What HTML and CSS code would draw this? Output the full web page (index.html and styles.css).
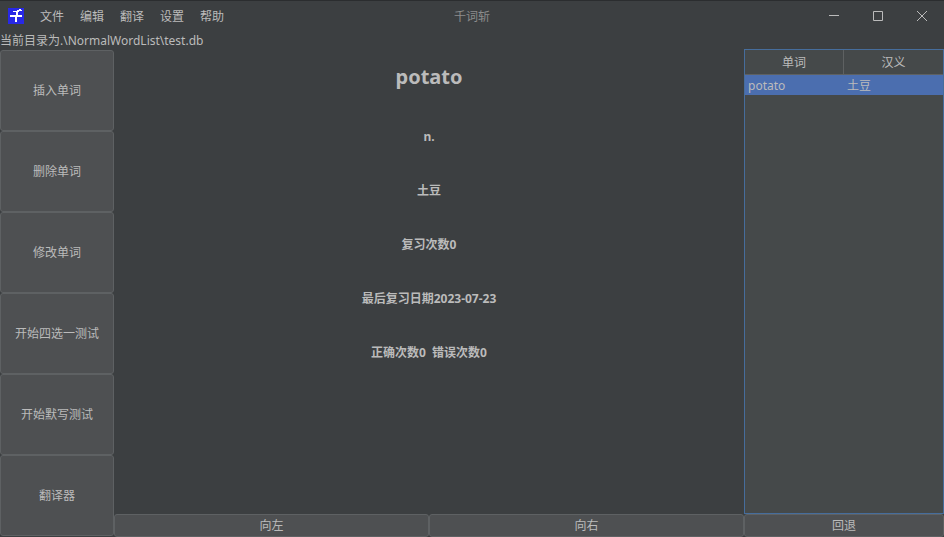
FILE: index.html
```html
<!DOCTYPE html>
<html lang="zh-CN">
<head>
<meta charset="utf-8">
<title>千词斩</title>
<link rel="stylesheet" href="styles.css">
</head>
<body>
<div class="window">
  <header class="titlebar">
    <svg class="logo" viewBox="0 0 16 16" shape-rendering="crispEdges" aria-hidden="true">
      <rect width="16" height="16" fill="#2828e6"/>
      <path d="M11 1h2v1h-2ZM9 2h5v1H9ZM5 3h6v1H5ZM8 4h2v3H8ZM2 7h12v2H2ZM7 9h2v5H7Z" fill="#fff"/>
    </svg>
    <nav class="menu">
      <button class="menu-item">文件</button>
      <button class="menu-item">编辑</button>
      <button class="menu-item">翻译</button>
      <button class="menu-item">设置</button>
      <button class="menu-item">帮助</button>
    </nav>
    <h1 class="title">千词斩</h1>
    <div class="controls">
      <button class="control" aria-label="最小化"><svg viewBox="0 0 10 10"><path d="M0 4.5H10"/></svg></button>
      <button class="control" aria-label="最大化"><svg viewBox="0 0 10 10"><path d="M.5 .5H9.500V9.500H.5Z"/></svg></button>
      <button class="control" aria-label="关闭"><svg viewBox="0 0 10 10"><path d="M0 0 10 10M10 0 0 10"/></svg></button>
    </div>
  </header>
  <p class="path">当前目录为.\NormalWordList\test.db</p>
  <div class="content">
    <aside class="actions">
      <button class="btn">插入单词</button>
      <button class="btn">删除单词</button>
      <button class="btn">修改单词</button>
      <button class="btn">开始四选一测试</button>
      <button class="btn">开始默写测试</button>
      <button class="btn">翻译器</button>
    </aside>
    <main class="center">
      <section class="card">
        <h2 class="word">potato</h2>
        <p class="detail">n.</p>
        <p class="detail">土豆</p>
        <p class="detail">复习次数0</p>
        <p class="detail">最后复习日期2023-07-23</p>
        <p class="detail">正确次数0&nbsp; 错误次数0</p>
      </section>
      <div class="pager">
        <button class="btn">向左</button>
        <button class="btn">向右</button>
      </div>
    </main>
    <aside class="list">
      <div class="list-view">
        <table class="words">
          <thead><tr><th>单词</th><th>汉义</th></tr></thead>
          <tbody><tr class="selected"><td>potato</td><td>土豆</td></tr></tbody>
        </table>
      </div>
      <button class="btn back">回退</button>
    </aside>
  </div>
</div>
</body>
</html>
```
FILE: styles.css
```css
* {
  box-sizing: border-box;
  margin: 0;
  padding: 0;
}

body {
  background: #3c3f41;
  color: #bbbbbb;
  font: 12px/16px "Noto Sans", "Noto Sans CJK SC", sans-serif;
}

button {
  font: inherit;
  color: inherit;
  background: none;
  border: 0;
}

.window {
  display: flex;
  flex-direction: column;
  height: 100vh;
}

.titlebar {
  display: grid;
  grid-template-columns: 1fr auto 1fr;
  align-items: center;
  height: 32px;
  border-top: 1px solid #2b2d2f;
}

.logo {
  grid-area: 1 / 1;
  align-self: start;
  width: 16px;
  height: 16px;
  margin: 7px 0 0 8px;
}

.menu {
  grid-area: 1 / 1;
  display: flex;
  margin-left: 32px;
}

.menu-item {
  padding: 0 8px;
}

.title {
  grid-area: 1 / 2;
  font-size: 12px;
  font-weight: 400;
  color: #8c8c8c;
}

.controls {
  grid-area: 1 / 3;
  align-self: start;
  display: flex;
  justify-content: flex-end;
}

.control {
  display: flex;
  align-items: center;
  justify-content: center;
  width: 44px;
  height: 30px;
}

.control svg {
  width: 10px;
  height: 10px;
  fill: none;
  stroke: #bbbbbb;
  overflow: visible;
}

.path {
  height: 17px;
  line-height: 17px;
}

.content {
  flex: 1;
  display: grid;
  grid-template-columns: 114px 1fr 200px;
  min-height: 0;
}

.btn {
  background: #4e5052;
  border: 1px solid #5e6163;
  border-radius: 3px;
}

.actions {
  display: grid;
  grid-auto-rows: 1fr;
  padding: 1px 0;
}

.center,
.list {
  display: flex;
  flex-direction: column;
  min-width: 0;
}

.card {
  flex: 1;
  display: flex;
  flex-direction: column;
  gap: 38px;
  padding-top: 14px;
  text-align: center;
  font-weight: 700;
}

.word {
  font-size: 20px;
  line-height: 28px;
}

.pager {
  display: grid;
  grid-template-columns: 1fr 1fr;
  height: 23px;
}

.list-view {
  flex: 1;
  background: #45494a;
  border: 1px solid #466d9c;
}

.words {
  width: 100%;
  table-layout: fixed;
  border-collapse: separate;
  border-spacing: 0;
}

.words th {
  height: 25px;
  padding-top: 2px;
  font-weight: 400;
  border-bottom: 1px solid #5e6162;
}

.words th:first-child {
  border-right: 1px solid #5e6162;
}

.words td {
  height: 20px;
  padding: 2px 3px 0;
}

.selected {
  background: #4b6eaf;
}

.back {
  height: 23px;
}
```
